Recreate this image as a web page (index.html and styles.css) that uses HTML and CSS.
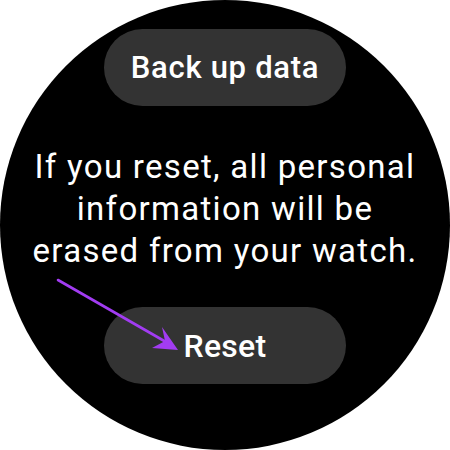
FILE: index.html
```html
<!DOCTYPE html>
<html>
<head>
<meta charset="utf-8">
<link rel="stylesheet" href="styles.css">
</head>
<body>
<div class="watch">
  <button class="pill">Back up data</button>
  <p class="message">If you reset, all personal<br>information will be<br>erased from your watch.</p>
  <button class="pill pill-reset">Reset</button>
  <svg class="arrow" width="450" height="450" viewBox="0 0 450 450">
    <line x1="58" y1="280" x2="166" y2="342" stroke="#a23cf2" stroke-width="2.6" stroke-linecap="round"/>
    <polygon points="178,350 162,327 165,341 152,348" fill="#a23cf2"/>
  </svg>
</div>
</body>
</html>
```
FILE: styles.css
```css
html, body {
  margin: 0;
  padding: 0;
  background: #fff;
}
.watch {
  position: relative;
  width: 450px;
  height: 450px;
  border-radius: 50%;
  background: #000;
  display: flex;
  flex-direction: column;
  align-items: center;
  box-sizing: border-box;
  padding-top: 29px;
  font-family: Roboto, "Noto Sans", sans-serif;
  color: #fff;
}
.pill {
  width: 242px;
  height: 77px;
  border: none;
  border-radius: 39px;
  background: #333333;
  color: #fff;
  font-family: Roboto, sans-serif;
  font-weight: 500;
  font-size: 31px;
  letter-spacing: 0.7px;
  padding: 0;
  flex-shrink: 0;
}
.message {
  margin: 40px 0 0;
  font-size: 33px;
  letter-spacing: 1.3px;
  line-height: 42px;
  text-align: center;
  white-space: nowrap;
  height: 126px;
}
.pill-reset {
  margin-top: 35px;
  font-size: 32px;
  letter-spacing: 0.3px;
}
.arrow {
  position: absolute;
  left: 0;
  top: 0;
}
```
